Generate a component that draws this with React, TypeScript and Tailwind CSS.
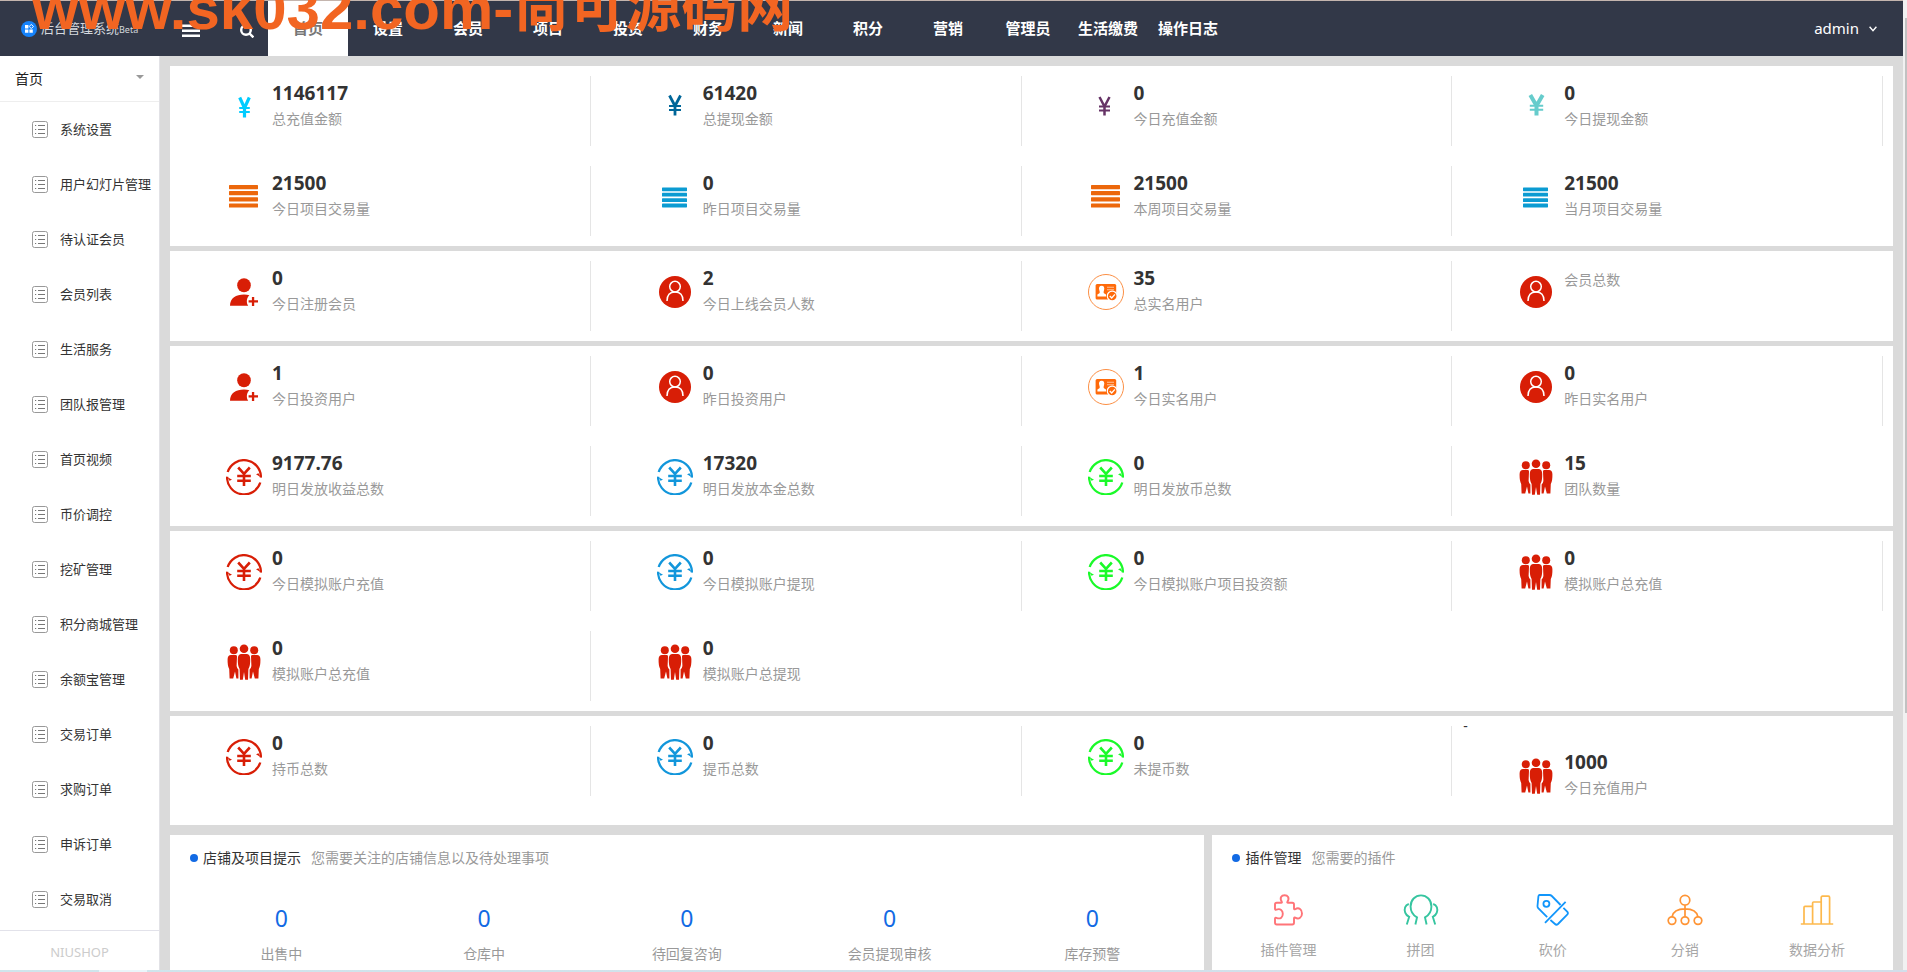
import React from 'react';

type IconName =
  | 'yenCyan'
  | 'yenBlue'
  | 'yenPurple'
  | 'yenTeal'
  | 'barsOrange'
  | 'barsBlue'
  | 'userPlus'
  | 'userCircle'
  | 'idCard'
  | 'cycleRed'
  | 'cycleBlue'
  | 'cycleGreen'
  | 'people';

interface Stat {
  icon: IconName;
  value?: string;
  label: string;
  prefix?: string;
}

const navItems = ['首页', '设置', '会员', '项目', '投资', '财务', '新闻', '积分', '营销', '管理员', '生活缴费', '操作日志'];

const menuItems = [
  '系统设置',
  '用户幻灯片管理',
  '待认证会员',
  '会员列表',
  '生活服务',
  '团队报管理',
  '首页视频',
  '币价调控',
  '挖矿管理',
  '积分商城管理',
  '余额宝管理',
  '交易订单',
  '求购订单',
  '申诉订单',
  '交易取消',
];

const statGroups: Stat[][] = [
  [
    { icon: 'yenCyan', value: '1146117', label: '总充值金额' },
    { icon: 'yenBlue', value: '61420', label: '总提现金额' },
    { icon: 'yenPurple', value: '0', label: '今日充值金额' },
    { icon: 'yenTeal', value: '0', label: '今日提现金额' },
    { icon: 'barsOrange', value: '21500', label: '今日项目交易量' },
    { icon: 'barsBlue', value: '0', label: '昨日项目交易量' },
    { icon: 'barsOrange', value: '21500', label: '本周项目交易量' },
    { icon: 'barsBlue', value: '21500', label: '当月项目交易量' },
  ],
  [
    { icon: 'userPlus', value: '0', label: '今日注册会员' },
    { icon: 'userCircle', value: '2', label: '今日上线会员人数' },
    { icon: 'idCard', value: '35', label: '总实名用户' },
    { icon: 'userCircle', label: '会员总数' },
  ],
  [
    { icon: 'userPlus', value: '1', label: '今日投资用户' },
    { icon: 'userCircle', value: '0', label: '昨日投资用户' },
    { icon: 'idCard', value: '1', label: '今日实名用户' },
    { icon: 'userCircle', value: '0', label: '昨日实名用户' },
    { icon: 'cycleRed', value: '9177.76', label: '明日发放收益总数' },
    { icon: 'cycleBlue', value: '17320', label: '明日发放本金总数' },
    { icon: 'cycleGreen', value: '0', label: '明日发放币总数' },
    { icon: 'people', value: '15', label: '团队数量' },
  ],
  [
    { icon: 'cycleRed', value: '0', label: '今日模拟账户充值' },
    { icon: 'cycleBlue', value: '0', label: '今日模拟账户提现' },
    { icon: 'cycleGreen', value: '0', label: '今日模拟账户项目投资额' },
    { icon: 'people', value: '0', label: '模拟账户总充值' },
    { icon: 'people', value: '0', label: '模拟账户总充值' },
    { icon: 'people', value: '0', label: '模拟账户总提现' },
  ],
  [
    { icon: 'cycleRed', value: '0', label: '持币总数' },
    { icon: 'cycleBlue', value: '0', label: '提币总数' },
    { icon: 'cycleGreen', value: '0', label: '未提币数' },
    { icon: 'people', value: '1000', label: '今日充值用户', prefix: '-' },
  ],
];

const shopTips = ['出售中', '仓库中', '待回复咨询', '会员提现审核', '库存预警'];

const YenIcon = ({ color, cx, half, top, bottom, weight }: { color: string; cx: number; half: number; top: number; bottom: number; weight: number }) => {
  const mid = top + (bottom - top) * 0.52;
  return (
    <svg viewBox="0 0 36 36" className="h-9 w-9" fill="none" stroke={color} strokeWidth={weight}>
      <path d={`M${cx - half} ${top} L${cx} ${mid} L${cx + half} ${top} M${cx} ${mid - 1} V${bottom}`} />
      <path d={`M${cx - half - 0.5} ${mid} H${cx + half + 0.5} M${cx - half - 0.5} ${mid + 4} H${cx + half + 0.5}`} strokeWidth={2} />
    </svg>
  );
};

const BarsIcon = ({ color, x, width, ys, h }: { color: string; x: number; width: number; ys: number[]; h: number }) => (
  <svg viewBox="0 0 36 36" className="h-9 w-9" fill={color}>
    {ys.map((y) => (
      <rect key={y} x={x} y={y} width={width} height={h} rx="0.6" />
    ))}
  </svg>
);

const CycleIcon = ({ color }: { color: string }) => (
  <svg viewBox="0 0 36 36" className="h-9 w-9" fill="none" stroke={color}>
    <path d="M1.7 13 A17 17 0 0 1 34.9 18.5" strokeWidth="2.3" />
    <path d="M34.3 23.5 A17 17 0 0 1 1.1 17.8" strokeWidth="2.3" />
    <path d="M36 19 L30 15.2 L32.5 14.2 L34 17 Z M0 17.2 L6 20.8 L3.4 21.8 L2 19 Z" fill={color} stroke="none" />
    <path d="M12.2 8.5 L18 14.8 L23.8 8.5 M18 14.5 V27 M11.2 17 H24.8 M11.2 21.8 H24.8" strokeWidth="2.6" />
  </svg>
);

const StatIcon = ({ name }: { name: IconName }) => {
  switch (name) {
    case 'yenCyan':
      return <YenIcon color="#00ccff" cx={18.5} half={4.8} top={8.5} bottom={28.5} weight={3.2} />;
    case 'yenBlue':
      return <YenIcon color="#006699" cx={18} half={5.5} top={6.5} bottom={26.5} weight={2.8} />;
    case 'yenPurple':
      return <YenIcon color="#663366" cx={16.5} half={5} top={8} bottom={26.5} weight={2.5} />;
    case 'yenTeal':
      return <YenIcon color="#66cccc" cx={18.5} half={6.2} top={6} bottom={26.5} weight={4} />;
    case 'barsOrange':
      return <BarsIcon color="#ec670b" x={3} width={29} ys={[6, 12, 18.2, 24.4]} h={4.2} />;
    case 'barsBlue':
      return <BarsIcon color="#0b9bd2" x={5} width={25} ys={[8.4, 13.8, 19.2, 24.6]} h={3.8} />;
    case 'userPlus':
      return (
        <svg viewBox="0 0 36 36" className="h-9 w-9" fill="#d81e06">
          <ellipse cx="18" cy="11.3" rx="6.8" ry="7" />
          <path d="M4 31.8 C4 24 10 20.4 18 20.4 C20 20.4 21.8 20.6 23.4 21.2 C20.6 23.6 20 28.6 22.2 31.8 Z" />
          <path d="M25.9 23 H28.2 V26.2 H32 V28.5 H28.2 V32 H25.9 V28.5 H22.6 V26.2 H25.9 Z" />
        </svg>
      );
    case 'userCircle':
      return (
        <svg viewBox="0 0 36 36" className="h-9 w-9">
          <circle cx="18" cy="18" r="16" fill="#d81e06" />
          <g fill="none" stroke="#ffffff" strokeWidth="1.5">
            <circle cx="18" cy="12.6" r="5.3" />
            <path d="M10 27 C10 21.5 12.6 18 18 18 C23.4 18 26 21.5 26 27" />
          </g>
        </svg>
      );
    case 'idCard':
      return (
        <svg viewBox="0 0 36 36" className="h-9 w-9">
          <circle cx="18" cy="18" r="17.5" fill="none" stroke="#fb8f45" />
          <rect x="7.6" y="10" width="20.6" height="15.4" rx="1.5" fill="#ff6a0a" />
          <path d="M13.6 11.8 C16 11.8 16.8 13.8 16 16.2 C15.6 17.4 15.4 18.6 16 19.2 L18 20.4 V22.4 H9.4 V20.4 L11.4 19.2 C12 18.6 11.8 17.4 11.3 16.2 C10.4 13.8 11.4 11.8 13.6 11.8 Z" fill="#ffffff" />
          <path d="M19 13.2 H26 M19 15.8 H26" stroke="#ffc29a" strokeWidth="1.1" />
          <circle cx="24.2" cy="22" r="4.9" fill="#ff6a0a" stroke="#ffffff" strokeWidth="1.2" />
          <path d="M21.8 22 L23.7 23.9 L26.9 20.4" fill="none" stroke="#ffffff" strokeWidth="1.4" />
        </svg>
      );
    case 'cycleRed':
      return <CycleIcon color="#d81e06" />;
    case 'cycleBlue':
      return <CycleIcon color="#1296db" />;
    case 'cycleGreen':
      return <CycleIcon color="#1afa29" />;
    case 'people':
      return (
        <svg viewBox="0 0 36 36" className="h-9 w-9" fill="#d81e06">
          <circle cx="7.8" cy="6.2" r="4" />
          <circle cx="28.2" cy="6.2" r="4" />
          <path d="M5 11 H9.6 Q11 11 11 12.4 L10.6 22 Q11 24.6 12.4 25.4 V34.6 H10.4 L9 27.6 L7.2 34.6 H3.6 L3.2 25 Q1.4 22 1.6 15 Q1.8 11.2 5 11 Z" />
          <path d="M31 11 H26.4 Q25 11 25 12.4 L25.4 22 Q25 24.6 23.6 25.4 V34.6 H25.6 L27 27.6 L28.8 34.6 H32.4 L32.8 25 Q34.6 22 34.4 15 Q34.2 11.2 31 11 Z" />
          <circle cx="18" cy="4.8" r="4.3" />
          <path d="M15 10 H21 Q24.2 10.4 24.2 15 Q24.4 22 22.4 25 L22 35.8 H19.2 L18 28 L16.8 35.8 H14 L13.6 25 Q11.6 22 11.8 15 Q11.8 10.4 15 10 Z" />
        </svg>
      );
  }
};

const StatCell = ({ stat }: { stat: Stat }) => (
  <div className="group w-1/4">
    {stat.prefix && <div className="pl-px text-sm leading-[19px] text-[#333333]">{stat.prefix}</div>}
    <div className="p-2.5">
      <div className="flex h-[70px] gap-2.5 border-r border-[#e5e5e5] pl-[46px] group-last:border-r-0">
        <div className="mt-[13px] shrink-0">
          <StatIcon name={stat.icon} />
        </div>
        <div className="pt-[5px]">
          {stat.value && <p className="text-[19px] leading-6 font-bold text-[#333333]">{stat.value}</p>}
          <p className="mt-1 text-sm leading-5 text-[#999999]">{stat.label}</p>
        </div>
      </div>
    </div>
  </div>
);

const PanelTitle = ({ title, hint }: { title: string; hint: string }) => (
  <div className="flex items-center px-5 pt-[13px] text-sm leading-5">
    <span className="mr-[5px] h-2 w-2 rounded-full bg-[#126ae4]"></span>
    <h2 className="text-[#333333]">{title}</h2>
    <span className="ml-2.5 text-[#999999]">{hint}</span>
  </div>
);

const plugins = [
  {
    label: '插件管理',
    icon: (
      <svg viewBox="0 0 32 32" className="h-8 w-8" fill="none" stroke="#ff7478" strokeWidth="1.9" strokeLinejoin="round">
        <path d="M3 10.5 Q3 8.8 4.7 8.8 H9.2 Q10.3 8.8 9.8 7.8 C7.2 3.8 9.6 1.3 12.6 1.3 C15.6 1.3 18 3.8 15.4 7.8 Q14.9 8.8 16 8.8 H20.3 Q22 8.8 22 10.5 V14.4 Q22 15.8 23.2 15.2 C27 12.8 30 15.8 30 19.4 C30 23 27 26 23.2 23.6 Q22 23 22 24.4 V28.8 Q22 30.5 20.3 30.5 H4.7 Q3 30.5 3 28.8 V24.6 Q3 23.4 4.4 23.8 C8.8 25.6 10.8 23 10.8 19.8 C10.8 16.4 8.6 14.2 4.4 15.6 Q3 16 3 14.8 Z" />
      </svg>
    ),
  },
  {
    label: '拼团',
    icon: (
      <svg viewBox="0 0 36 32" className="h-8 w-9" fill="none" stroke="#36c5a0" strokeWidth="1.9">
        <path d="M12.4 30.5 L14 23.4 C9.6 20.8 7.6 16.6 7.6 12.4 C7.6 6 12.2 1.4 18 1.4 C23.8 1.4 28.4 6 28.4 12.4 C28.4 16.6 26.4 20.8 22 23.4 L23.6 30.5" />
        <path d="M5.8 10 C2 11 0.9 15.2 2.2 18.6 C2.8 20.4 4.2 21.8 6.2 22.8 L3.8 30.5" />
        <path d="M30.2 10 C34 11 35.1 15.2 33.8 18.6 C33.2 20.4 31.8 21.8 29.8 22.8 L32.2 30.5" />
      </svg>
    ),
  },
  {
    label: '砍价',
    icon: (
      <svg viewBox="0 0 34 32" className="h-8 w-[34px]" fill="none" stroke="#1296fb" strokeWidth="1.8" strokeLinejoin="round">
        <path d="M11.2 23.2 L2.2 14.2 Q1.4 13.2 1.5 12 L2.4 2.4 Q2.6 0.9 4 0.8 L13.4 1 Q14.8 1 15.8 2 L24.6 11" />
        <path d="M27.4 13.8 L31.2 17.6 Q32.6 19.2 31.2 20.6 L22 30 Q20.4 31.4 19 30 L14.4 26" />
        <circle cx="10.4" cy="9.8" r="3" />
        <path d="M9 28.8 L29.6 7.8" />
      </svg>
    ),
  },
  {
    label: '分销',
    icon: (
      <svg viewBox="0 0 36 32" className="h-8 w-9" fill="none" stroke="#ff9434" strokeWidth="1.7">
        <circle cx="18" cy="6.2" r="4.8" />
        <circle cx="5" cy="26.6" r="3.8" />
        <circle cx="18" cy="26.6" r="3.8" />
        <circle cx="31" cy="26.6" r="3.8" />
        <path d="M18 11 V22.8 M5 22.8 C6 17.6 11 14.8 18 14.8 C25 14.8 30 17.6 31 22.8" />
      </svg>
    ),
  },
  {
    label: '数据分析',
    icon: (
      <svg viewBox="0 0 34 32" className="h-8 w-[34px]" fill="none" stroke="#fdb94d" strokeWidth="1.7" strokeLinejoin="round">
        <path d="M0.8 30 H33.2" />
        <path d="M4 30 V13.4 Q4 12.4 5 12.4 H12.2 M12.6 30 V9 Q12.6 8 13.6 8 H20.6 M21.2 30 V3.4 Q21.2 2.2 22.4 2.2 H28.4 Q29.6 2.2 29.6 3.4 V30" />
      </svg>
    ),
  },
];

const Header = () => (
  <header className="flex h-14 items-center border-t border-[#c4b5ae] bg-[#323848] text-white">
    <div className="flex w-[160px] shrink-0 items-center pl-[21px]">
      <svg viewBox="0 0 16 16" className="mr-1 h-4 w-4">
        <circle cx="8" cy="8" r="8" fill="#1683fb" />
        <path d="M4 4 H7.4 V7.4 H4 Z M4 8.4 H7.4 V11.8 H4 Z M8.4 8.4 H11.8 V11.8 H8.4 Z" fill="#ffffff" />
        <path d="M10.3 3.4 L12.4 5.5 L10.3 7.6 L8.2 5.5 Z" fill="none" stroke="#ffffff" />
      </svg>
      <h1 className="flex items-baseline text-[13px] whitespace-nowrap text-[#d5d8de]">
        后台管理系统<span className="text-[9px]">Beta</span>
      </h1>
    </div>
    <button aria-label="菜单" className="ml-[22px] pt-1">
      <svg viewBox="0 0 18 14" className="h-3.5 w-[18px]" fill="#ffffff">
        <path d="M0 0.6 H18 V3 H0 Z M0 5.6 H18 V8 H0 Z M0 10.6 H18 V13 H0 Z" />
      </svg>
    </button>
    <button aria-label="搜索" className="ml-10 w-7 pt-1">
      <svg viewBox="0 0 14 14" className="h-3.5 w-3.5" fill="none" stroke="#ffffff" strokeWidth="2.4">
        <circle cx="6" cy="6" r="4.8" />
        <path d="M9.4 9.4 L13.4 13.4" />
      </svg>
    </button>
    <nav className="flex h-full text-[15px] font-bold">
      {navItems.map((item, index) => (
        <a
          key={item}
          href="#"
          className={`flex h-full w-20 items-center justify-center whitespace-nowrap ${index === 0 ? 'bg-white text-[#777777]' : ''}`}
        >
          {item}
        </a>
      ))}
    </nav>
    <button className="mr-[26px] ml-auto flex items-center gap-2.5 text-[15px]">
      admin
      <svg viewBox="0 0 8 6" className="h-1.5 w-2" fill="none" stroke="#ffffff" strokeWidth="1.4">
        <path d="M0.6 0.8 L4 4.6 L7.4 0.8" />
      </svg>
    </button>
  </header>
);

const Sidebar = () => (
  <aside className="flex w-[160px] shrink-0 flex-col border-r border-[#e2e2e6] bg-white">
    <button className="flex h-[46px] shrink-0 items-center justify-between border-b border-[#eeeeee] pr-[15px] pl-[15px] text-sm text-[#222222]">
      首页
      <svg viewBox="0 0 8 4" className="mb-1 h-1 w-2" fill="#999999">
        <path d="M0 0 H8 L4 4 Z" />
      </svg>
    </button>
    <nav className="min-h-0 flex-1 overflow-hidden">
      {menuItems.map((item) => (
        <a key={item} href="#" className="flex h-[55px] items-center gap-3 pl-8 text-[13px] whitespace-nowrap text-[#333333]">
          <svg viewBox="0 0 16 17" className="h-[17px] w-4 shrink-0" fill="none" stroke="#777777">
            <rect x="0.5" y="0.5" width="15" height="16" rx="2" stroke="#999999" />
            <path d="M3 4.5 H4.2 M3 8.5 H4.2 M3 12.5 H4.2 M6 4.5 H13 M6 8.5 H13 M6 12.5 H13" />
          </svg>
          {item}
        </a>
      ))}
    </nav>
    <div className="flex h-10 shrink-0 items-center justify-center border-t border-[#e2e2ea] pt-1 text-[13px] text-[#cccccc]">
      NIUSHOP
    </div>
  </aside>
);

const Dashboard = () => (
  <main className="min-w-0 flex-1 overflow-hidden bg-[#dadada] p-2.5">
    <div className="flex flex-col gap-[5px]">
      {statGroups.map((group, index) => (
        <section key={index} className="flex flex-wrap bg-white">
          {group.map((stat, i) => (
            <StatCell key={i} stat={stat} />
          ))}
        </section>
      ))}
    </div>

    <div className="mt-2.5 flex justify-between">
      <section className="w-[60%] bg-white pb-8">
        <PanelTitle title="店铺及项目提示" hint="您需要关注的店铺信息以及待处理事项" />
        <div className="mt-8 flex px-2.5 text-center">
          {shopTips.map((label) => (
            <a key={label} href="#" className="w-1/5">
              <p className="text-[23px] leading-9 text-[#126ae4]">0</p>
              <p className="mt-2 text-sm leading-5 text-[#999999]">{label}</p>
            </a>
          ))}
        </div>
      </section>
      <section className="w-[39.5%] bg-white pb-8">
        <PanelTitle title="插件管理" hint="您需要的插件" />
        <div className="mt-[26px] flex px-2.5">
          {plugins.map((plugin) => (
            <a key={plugin.label} href="#" className="flex w-1/5 flex-col items-center">
              {plugin.icon}
              <span className="mt-3.5 text-sm leading-5 text-[#a6a6a6]">{plugin.label}</span>
            </a>
          ))}
        </div>
      </section>
    </div>
  </main>
);

const App: React.FC = () => {
  return (
    <div className="relative flex h-screen flex-col overflow-hidden font-['Noto_Sans','Noto_Sans_CJK_SC',sans-serif]">
      <div className="flex min-h-0 flex-1">
        <div className="flex min-w-0 flex-1 flex-col">
          <Header />
          <div className="flex min-h-0 flex-1">
            <Sidebar />
            <Dashboard />
          </div>
        </div>
        <div className="w-1 shrink-0 bg-[#f1f1f1] pt-[18px] pl-0.5">
          <div className="h-[73%] bg-[#c1c1c1]"></div>
        </div>
      </div>
      <div className="flex h-0.5 shrink-0 bg-gradient-to-r from-[#cfe5ec] to-[#d3deea]">
        <div className="ml-[99px] w-12 bg-[#eaf5fa]"></div>
      </div>

      <div className="pointer-events-none absolute -top-6 left-8 flex items-start font-bold whitespace-nowrap text-[#f26522]">
        <span className="font-['Liberation_Sans',sans-serif] text-[60px] leading-[66px]">www.sk032.com-</span>
        <span className="font-['Noto_Sans_CJK_SC',sans-serif] text-[56px] leading-[52px]">尚可源码网</span>
      </div>
    </div>
  );
};

export default App;
